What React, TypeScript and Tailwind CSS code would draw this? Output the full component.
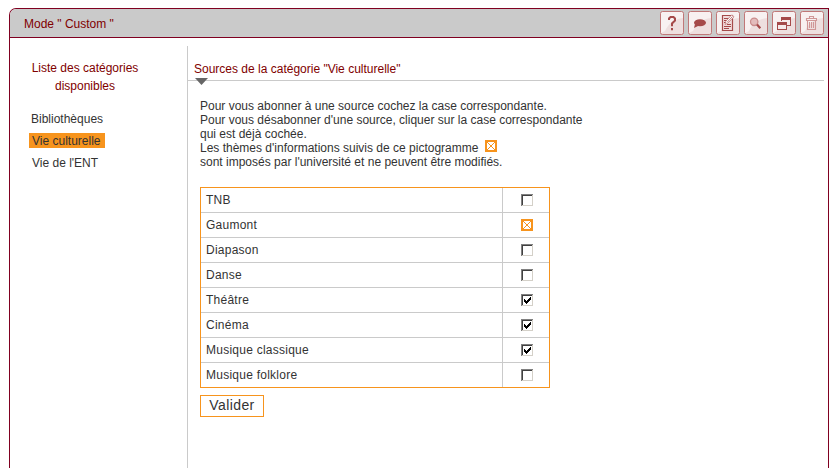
import type { ReactNode } from "react";

const dark = "#a54a4a";

function ToolButton({ children, label }: { children: ReactNode; label: string }) {
  return (
    <button aria-label={label} className="h-6 w-6 shrink-0">
      <svg width="24" height="24" viewBox="0 0 24 24" className="block">
        <rect x="0.5" y="0.5" width="23" height="23" rx="2" fill="#eedfdf" />
        <path d="M1 1H23V7C14 8 8 13 5 20L1 22Z" fill="#f8f1f1" />
        <rect x="0.5" y="0.5" width="23" height="23" rx="2" fill="none" stroke="#c07878" />
        {children}
      </svg>
    </button>
  );
}

function Locked() {
  return (
    <svg width="12" height="12" viewBox="0 0 12 12" shapeRendering="crispEdges" className="block shrink-0">
      <path d="M0 0H12V12H0Z" fill="#f7941d" />
      <path d="M2 2H10V10H2Z" fill="#fff" />
      <path d="M2 2h1v1h-1zM9 2h1v1h-1zM2 9h1v1h-1zM9 9h1v1h-1zM3 3h1v1h-1zM8 3h1v1h-1zM4 4h1v1h-1zM7 4h1v1h-1zM5 5h2v2h-2zM4 7h1v1h-1zM7 7h1v1h-1zM3 8h1v1h-1zM8 8h1v1h-1z" fill="#f7941d" />
    </svg>
  );
}

function Check({ on }: { on: boolean }) {
  return (
    <svg width="12" height="12" viewBox="0 0 12 12" shapeRendering="crispEdges" className="block">
      <path d="M0 0H12V12H0Z" fill="#d4d0c8" />
      <path d="M0 0H12V1H1V12H0Z" fill="#808080" />
      <path d="M1 1H11V2H2V11H1Z" fill="#404040" />
      <path d="M2 2H11V11H2Z" fill="#fff" />
      {on && (
        <path d="M3 5h1v3h-1zM4 6h1v3h-1zM5 7h1v3h-1zM6 6h1v3h-1zM7 5h1v3h-1zM8 4h1v3h-1zM9 3h1v3h-1z" fill="#000" />
      )}
    </svg>
  );
}

const rows: [string, string][] = [
  ["TNB", "off"],
  ["Gaumont", "locked"],
  ["Diapason", "off"],
  ["Danse", "off"],
  ["Théâtre", "on"],
  ["Cinéma", "on"],
  ["Musique classique", "on"],
  ["Musique folklore", "off"],
];

export default function App() {
  return (
    <div className="h-[468px] w-[839px] overflow-hidden bg-white pt-2 pl-[9px] font-['Liberation_Sans',Arial,sans-serif] text-[12px] whitespace-nowrap text-[#333]">
      <div className="flex h-[460px] w-[820px] flex-col overflow-hidden rounded-tl-[7px] border border-b-0 border-[#800020]">
        <header className="flex h-[29px] shrink-0 items-center justify-between border-b border-[#800020] bg-[#cacaca] pr-[4px] pl-[14px]">
          <h1 className="pt-px leading-[14px] text-[#800000]">Mode " Custom "</h1>
          <div className="flex gap-1">
            <ToolButton label="Aide">
              <path d="M9 9V7.5L10.5 6H13.5L15 7.5V9.5L12 12.5V15.3" fill="none" stroke={dark} strokeWidth="2" />
              <path d="M11 17h2v2.3h-2z" fill={dark} />
            </ToolButton>
            <ToolButton label="Commentaire">
              <ellipse cx="12" cy="11.8" rx="6" ry="3.5" fill={dark} />
              <path d="M7 13L6 17L11 14.5Z" fill={dark} />
            </ToolButton>
            <ToolButton label="Modifier">
              <path d="M6.5 4.5H16.5V19.5H6.5Z" fill="#f1dcdc" stroke={dark} strokeWidth="1.2" />
              <path d="M8 7.5H13M8 9.5H11M8 11.5H10M11 13.5H15M8 15.5H15M8 17.5H13" stroke={dark} strokeWidth="1.1" />
              <path d="M9 13.5L9.8 10.3L15.8 3.8L18 5.8L11.8 12.2Z" fill="#fff" stroke="#b96a6a" strokeWidth="0.7" />
              <path d="M11 11.4L16.5 5.4" stroke={dark} strokeWidth="0.7" />
            </ToolButton>
            <ToolButton label="Rechercher">
              <circle cx="10.2" cy="10.8" r="3.7" fill="#e3bcbc" stroke="#cb8e8e" strokeWidth="1.3" />
              <path d="M13 13.6L16.3 17.3" stroke={dark} strokeWidth="2.2" />
            </ToolButton>
            <ToolButton label="Agrandir">
              <g shapeRendering="crispEdges">
                <path d="M9 6H19V15H9Z" fill={dark} />
                <path d="M10 9H18V14H10Z" fill="#f6eaea" />
                <path d="M4 10H15V11H4Z" fill="#f6eaea" />
                <path d="M15 10H16V14H15Z" fill="#f6eaea" />
                <path d="M5 11H15V19H5Z" fill={dark} />
                <path d="M6 14H14V18H6Z" fill="#f6eaea" />
              </g>
            </ToolButton>
            <ToolButton label="Supprimer">
              <path d="M6.5 7.5H16.5V9.5H6.5ZM9.5 7V5.5H13.5V7M7.5 9.5V18.5H15.5V9.5M9.5 11V17M11.5 11V17M13.5 11V17" fill="none" stroke="#d09797" strokeWidth="1.1" />
            </ToolButton>
          </div>
        </header>
        <div className="flex grow">
          <aside className="flex w-[177px] flex-col pt-[21px]">
            <h2 className="w-[150px] text-center leading-[18px] text-[#800000]">
              Liste des catégories
              <br />
              disponibles
            </h2>
            <nav className="flex flex-col items-start gap-[7px] pt-4 pl-[19px] leading-[15px]">
              <a className="h-[15px] pt-px pl-[2px]">Bibliothèques</a>
              <a className="h-[15px] w-[76px] bg-[#f7941d] pt-px pl-[3px]">Vie culturelle</a>
              <a className="h-[15px] pt-px pl-[3px]">Vie de l'ENT</a>
            </nav>
          </aside>
          <main className="mt-2 grow border-l border-[#cacaca]">
            <div className="mr-1 h-[35px] border-b border-[#cacaca] pt-[15px] pl-[6px]">
              <h2 className="leading-4 text-[#800000]">Sources de la catégorie "Vie culturelle"</h2>
              <svg width="13" height="7" viewBox="0 0 13 7" className="mt-px ml-px block">
                <path d="M0 0H13L6.5 7Z" fill="#666" />
              </svg>
            </div>
            <div className="pt-[18px] pl-3">
              <div className="leading-[14px]">
                <p>Pour vous abonner à une source cochez la case correspondante.</p>
                <p>Pour vous désabonner d'une source, cliquer sur la case correspondante</p>
                <p>qui est déjà cochée.</p>
                <div className="flex h-[14px] gap-[7px]">
                  <p>Les thèmes d'informations suivis de ce pictogramme</p>
                  <div className="-mt-px">
                    <Locked />
                  </div>
                </div>
                <p>sont imposés par l'université et ne peuvent être modifiés.</p>
              </div>
              <div className="mt-[18px] w-[350px] divide-y divide-[#cacaca] border border-[#f7941d]">
                {rows.map(([name, state]) => (
                  <div key={name} className="flex h-[25px] last:h-6">
                    <div className="w-[302px] border-r border-[#cacaca] pl-[5px] leading-6 tracking-[0.25px]">{name}</div>
                    <div className="pt-[6px] pl-[18px]">{state === "locked" ? <Locked /> : <Check on={state === "on"} />}</div>
                  </div>
                ))}
              </div>
              <button className="mt-[7px] block h-[22px] w-16 border border-[#f7941d] pb-px text-[14px] leading-[19px] tracking-[0.4px]">Valider</button>
            </div>
          </main>
        </div>
      </div>
    </div>
  );
}
